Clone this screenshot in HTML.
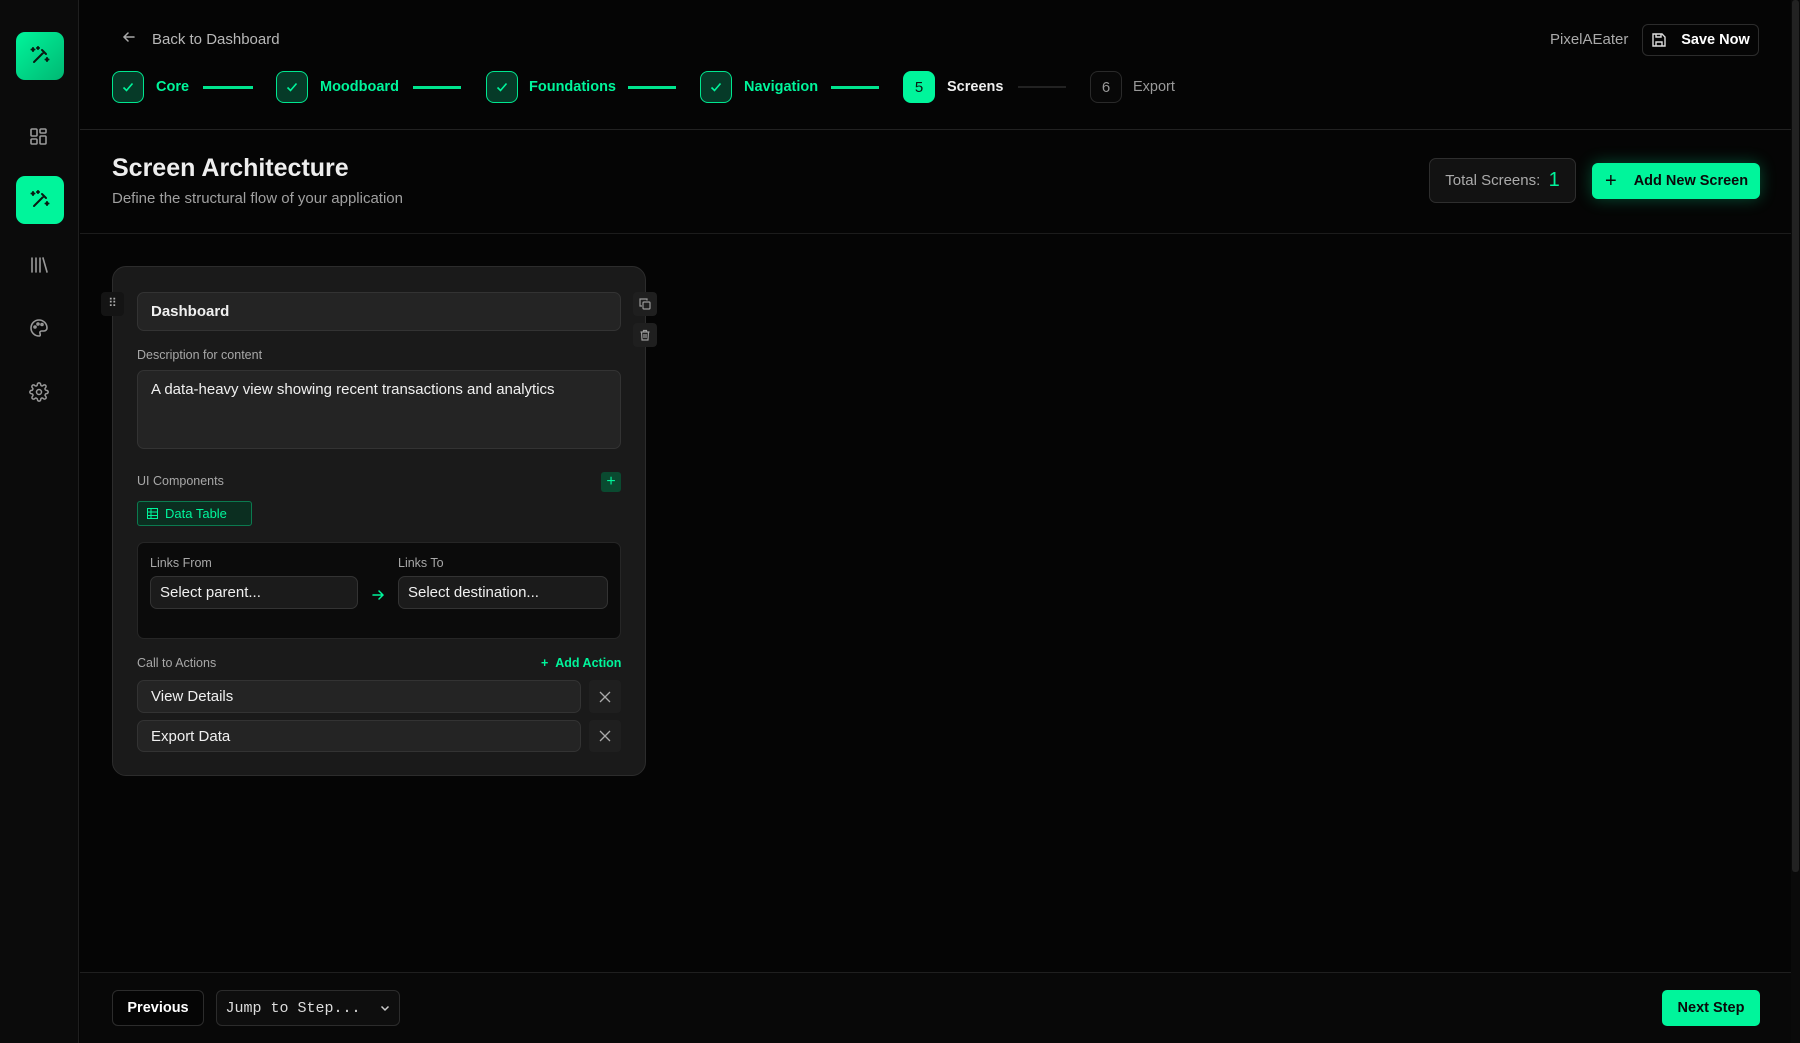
<!DOCTYPE html>
<html><head><meta charset="utf-8"><style>
*{box-sizing:border-box;margin:0;padding:0}
body{width:1800px;height:1043px;background:#050505;font-family:"Liberation Sans",sans-serif;color:#e8e8e8;position:relative;overflow:hidden}
.a{position:absolute}
.side{left:0;top:0;width:79px;height:1043px;background:#0b0b0b;border-right:1px solid #1f1f1f}
.ic{left:16px;width:48px;height:48px;border-radius:9px;display:flex;align-items:center;justify-content:center}
.step{top:71px;width:32px;height:32px;border-radius:8px;border:1.5px solid #00e68f;background:#063a28;display:flex;align-items:center;justify-content:center}
.st{top:79px;font-size:14.5px;font-weight:bold;color:#00f59b}
.ln{top:86px;height:3px;background:#00e68f}
.inp{background:#242424;border:1px solid #333;border-radius:7px;color:#f0f0f0;font-size:15px;padding-left:13px;display:flex;align-items:center}
.lbl{font-size:12.5px;color:#a8a8a8}
.btn{border:1px solid #2c2c2c;border-radius:6px;display:flex;align-items:center;justify-content:center;font-size:14.5px;font-weight:bold}
</style></head><body>
<div class="a side"></div>
<div class="a ic" style="top:32px;background:linear-gradient(135deg,#00f59b,#00b873)"><svg width="24" height="24" viewBox="0 0 24 24" fill="none" stroke="#0a1a12" stroke-width="2" stroke-linecap="round"><path d="M6 18L16 8M14 6l4 4M5 4v3M3.5 5.5h3M19 14v3M17.5 15.5h3M10 3v2M9 4h2"/></svg></div>
<div class="a" style="left:29px;top:127px"><svg width="20" height="20" viewBox="0 0 20 20" fill="none" stroke="#999" stroke-width="1.6"><rect x="2" y="2" width="6" height="7" rx="1"/><rect x="11" y="2" width="6" height="4" rx="1"/><rect x="11" y="9" width="6" height="8" rx="1"/><rect x="2" y="12" width="6" height="5" rx="1"/></svg></div>
<div class="a ic" style="top:176px;background:#00f59b"><svg width="24" height="24" viewBox="0 0 24 24" fill="none" stroke="#0a1a12" stroke-width="2" stroke-linecap="round"><path d="M6 18L16 8M14 6l4 4M5 4v3M3.5 5.5h3M19 14v3M17.5 15.5h3M10 3v2M9 4h2"/></svg></div>
<div class="a" style="left:29px;top:255px"><svg width="20" height="20" viewBox="0 0 20 20" fill="none" stroke="#999" stroke-width="1.6" stroke-linecap="round"><path d="M3 3v14M7 3v14M11 3v14M14 3l4 14"/></svg></div>
<div class="a" style="left:29px;top:318px"><svg width="20" height="20" viewBox="0 0 20 20" fill="none" stroke="#999" stroke-width="1.6"><path d="M10 2a8 8 0 1 0 0 16c1.5 0 1.5-1.5 1-2.5s0-2.5 1.5-2.5H15a3 3 0 0 0 3-3c0-4.4-3.6-8-8-8z"/><circle cx="6" cy="9" r="1"/><circle cx="9" cy="6" r="1"/><circle cx="13" cy="6.5" r="1"/></svg></div>
<div class="a" style="left:29px;top:382px"><svg width="20" height="20" viewBox="0 0 24 24" fill="none" stroke="#999" stroke-width="1.8"><circle cx="12" cy="12" r="3"/><path d="M19.4 15a1.7 1.7 0 0 0 .3 1.8l.1.1a2 2 0 1 1-2.8 2.8l-.1-.1a1.7 1.7 0 0 0-1.8-.3 1.7 1.7 0 0 0-1 1.5V21a2 2 0 1 1-4 0v-.1a1.7 1.7 0 0 0-1.1-1.5 1.7 1.7 0 0 0-1.8.3l-.1.1a2 2 0 1 1-2.8-2.8l.1-.1a1.7 1.7 0 0 0 .3-1.8 1.7 1.7 0 0 0-1.500-1H3a2 2 0 1 1 0-4h.1a1.7 1.7 0 0 0 1.5-1.1 1.7 1.7 0 0 0-.3-1.8l-.1-.1a2 2 0 1 1 2.8-2.8l.1.1a1.7 1.7 0 0 0 1.8.3H9a1.7 1.7 0 0 0 1-1.5V3a2 2 0 1 1 4 0v.1a1.7 1.7 0 0 0 1 1.5 1.7 1.7 0 0 0 1.8-.3l.1-.1a2 2 0 1 1 2.8 2.8l-.1.1a1.7 1.7 0 0 0-.3 1.8V9a1.7 1.7 0 0 0 1.5 1H21a2 2 0 1 1 0 4h-.1a1.7 1.7 0 0 0-1.5 1z"/></svg></div>

<div class="a" style="left:122px;top:30px"><svg width="14" height="14" viewBox="0 0 14 14" fill="none" stroke="#aaa" stroke-width="1.5" stroke-linecap="round"><path d="M12 7H2M6 3L2 7l4 4"/></svg></div>
<div class="a" style="left:152px;top:31px;color:#b8b8b8;font-size:15px">Back to Dashboard</div>

<div class="a step" style="left:112px"><svg width="14" height="14" viewBox="0 0 14 14" fill="none" stroke="#00f59b" stroke-width="1.6"><path d="M2.5 7.5l3 3 6-7"/></svg></div>
<div class="a st" style="left:156px">Core</div><div class="a ln" style="left:203px;width:50px"></div>
<div class="a step" style="left:276px"><svg width="14" height="14" viewBox="0 0 14 14" fill="none" stroke="#00f59b" stroke-width="1.6"><path d="M2.5 7.5l3 3 6-7"/></svg></div>
<div class="a st" style="left:320px">Moodboard</div><div class="a ln" style="left:413px;width:48px"></div>
<div class="a step" style="left:486px"><svg width="14" height="14" viewBox="0 0 14 14" fill="none" stroke="#00f59b" stroke-width="1.6"><path d="M2.5 7.5l3 3 6-7"/></svg></div>
<div class="a st" style="left:529px">Foundations</div><div class="a ln" style="left:628px;width:48px"></div>
<div class="a step" style="left:700px"><svg width="14" height="14" viewBox="0 0 14 14" fill="none" stroke="#00f59b" stroke-width="1.6"><path d="M2.5 7.5l3 3 6-7"/></svg></div>
<div class="a st" style="left:744px">Navigation</div><div class="a ln" style="left:831px;width:48px"></div>
<div class="a step" style="left:903px;background:#00f59b;border-color:#00f59b;font-size:15px;color:#0a1a12">5</div>
<div class="a st" style="left:947px;color:#eee">Screens</div><div class="a ln" style="left:1018px;width:48px;height:2px;background:#222"></div>
<div class="a step" style="left:1090px;background:#080808;border:1px solid #2a2a2a;color:#999;font-size:15px">6</div>
<div class="a st" style="left:1133px;color:#999;font-weight:normal">Export</div>

<div class="a" style="left:1550px;top:31px;color:#aaa;font-size:15px">PixelAEater</div>
<div class="a btn" style="left:1642px;top:24px;width:117px;height:32px;color:#fff"><svg width="16" height="16" viewBox="0 0 16 16" fill="none" stroke="#ddd" stroke-width="1.4" style="margin-right:14px"><path d="M2 2h9l3 3v9H2z"/><path d="M5 2v3h5V2M5 14v-4h6v4"/></svg>Save Now</div>

<div class="a" style="left:80px;top:129px;width:1711px;height:1px;background:#222"></div>
<div class="a" style="left:112px;top:154px;font-size:25px;font-weight:bold;color:#eee">Screen Architecture</div>
<div class="a" style="left:112px;top:190px;font-size:15px;color:#a0a0a0">Define the structural flow of your application</div>
<div class="a" style="left:1429px;top:158px;width:147px;height:45px;border:1px solid #2e2e2e;border-radius:7px;background:#121212;display:flex;align-items:center;justify-content:center;font-size:15px;color:#aaa">Total Screens:&nbsp;&nbsp;<span style="color:#00f59b;font-size:20px">1</span></div>
<div class="a" style="left:1592px;top:163px;width:168px;height:36px;border-radius:6px;background:#00f59b;box-shadow:0 0 16px rgba(0,245,155,.3);display:flex;align-items:center;font-size:14.5px;font-weight:bold;color:#0a0a0a"><span style="margin-left:13px;margin-right:17px;font-size:20px;font-weight:normal">+</span>Add New Screen</div>
<div class="a" style="left:80px;top:233px;width:1711px;height:1px;background:#1c1c1c"></div>

<div class="a" style="left:112px;top:266px;width:534px;height:510px;background:#1a1a1a;border:1px solid #2c2c2c;border-radius:14px"></div>
<div class="a" style="left:101px;top:292px;width:23px;height:24px;background:#141414;border-radius:4px;color:#aaa;font-size:12px;text-align:center;line-height:22px">⠿</div>
<div class="a inp" style="left:137px;top:292px;width:484px;height:39px;font-weight:bold">Dashboard</div>
<div class="a" style="left:633px;top:292px;width:24px;height:24px;background:#1f1f1f;border-radius:4px;display:flex;align-items:center;justify-content:center"><svg width="12" height="12" viewBox="0 0 12 12" fill="none" stroke="#999" stroke-width="1.2"><rect x="4" y="4" width="7" height="7" rx="1"/><path d="M8 2.5V1H1v7h2"/></svg></div>
<div class="a" style="left:633px;top:323px;width:24px;height:24px;background:#1f1f1f;border-radius:4px;display:flex;align-items:center;justify-content:center"><svg width="12" height="12" viewBox="0 0 12 12" fill="none" stroke="#999" stroke-width="1.2"><path d="M1.5 3h9M4.5 3V1.5h3V3M2.5 3l.5 8h6l.5-8M5 5v4M7 5v4"/></svg></div>
<div class="a lbl" style="left:137px;top:348px">Description for content</div>
<div class="a inp" style="left:137px;top:370px;width:484px;height:79px;align-items:flex-start;padding-top:10px">A data-heavy view showing recent transactions and analytics</div>
<div class="a lbl" style="left:137px;top:474px">UI Components</div>
<div class="a" style="left:601px;top:472px;width:20px;height:20px;background:#0a4a30;border-radius:3px;color:#00f59b;text-align:center;line-height:19px;font-size:16px">+</div>
<div class="a" style="left:137px;top:501px;width:115px;height:25px;background:#0b2e20;border:1px solid #0b7a4f;border-radius:3px;color:#00f59b;font-size:13px;display:flex;align-items:center;padding-left:9px"><svg width="11" height="11" viewBox="0 0 11 11" fill="none" stroke="#00f59b" stroke-width="1"><rect x=".5" y=".5" width="10" height="10"/><path d="M.5 4h10M.5 7.5h10M4 .5v10"/></svg><span style="margin-left:7px">Data Table</span></div>
<div class="a" style="left:137px;top:542px;width:484px;height:97px;background:#0b0b0b;border:1px solid #262626;border-radius:7px"></div>
<div class="a lbl" style="left:150px;top:556px">Links From</div>
<div class="a lbl" style="left:398px;top:556px">Links To</div>
<div class="a inp" style="left:150px;top:576px;width:208px;height:33px;background:#1b1b1b;padding-left:9px">Select parent...</div>
<div class="a" style="left:371px;top:588px"><svg width="14" height="14" viewBox="0 0 14 14" fill="none" stroke="#00f59b" stroke-width="1.5" stroke-linecap="round"><path d="M2 7h10M8 3l4 4-4 4"/></svg></div>
<div class="a inp" style="left:398px;top:576px;width:210px;height:33px;background:#1b1b1b;padding-left:9px">Select destination...</div>
<div class="a lbl" style="left:137px;top:656px">Call to Actions</div>
<div class="a" style="left:541px;top:656px;color:#00f59b;font-size:12.5px;font-weight:bold">+&nbsp;&nbsp;Add Action</div>
<div class="a inp" style="left:137px;top:680px;width:444px;height:33px">View Details</div>
<div class="a" style="left:589px;top:680px;width:32px;height:33px;background:#1f1f1f;border-radius:4px;display:flex;align-items:center;justify-content:center"><svg width="12" height="12" viewBox="0 0 12 12" stroke="#aaa" stroke-width="1.3"><path d="M1 1l10 10M11 1L1 11"/></svg></div>
<div class="a inp" style="left:137px;top:720px;width:444px;height:32px">Export Data</div>
<div class="a" style="left:589px;top:720px;width:32px;height:32px;background:#1f1f1f;border-radius:4px;display:flex;align-items:center;justify-content:center"><svg width="12" height="12" viewBox="0 0 12 12" stroke="#aaa" stroke-width="1.3"><path d="M1 1l10 10M11 1L1 11"/></svg></div>

<div class="a" style="left:80px;top:972px;width:1711px;height:71px;background:#080808;border-top:1px solid #1f1f1f"></div>
<div class="a btn" style="left:112px;top:990px;width:92px;height:36px;background:#050505;color:#fff">Previous</div>
<div class="a btn" style="left:216px;top:990px;width:184px;height:36px;background:#0e0e0e;color:#ddd;font-family:'Liberation Mono',monospace;font-weight:normal;font-size:15px">Jump to Step...&nbsp;&nbsp;<svg width="12" height="12" viewBox="0 0 12 12" fill="none" stroke="#ccc" stroke-width="1.5"><path d="M2.5 4.5l3.5 3.5 3.5-3.5"/></svg></div>
<div class="a" style="left:1662px;top:990px;width:98px;height:36px;background:#00f59b;border-radius:5px;color:#0a0a0a;font-size:14.5px;font-weight:bold;display:flex;align-items:center;justify-content:center">Next Step</div>
<div class="a" style="left:1791px;top:0;width:9px;height:1043px;background:#0a0a0a"></div>
<div class="a" style="left:1792px;top:0;width:7px;height:872px;background:#222;border-radius:3px"></div>
</body></html>
